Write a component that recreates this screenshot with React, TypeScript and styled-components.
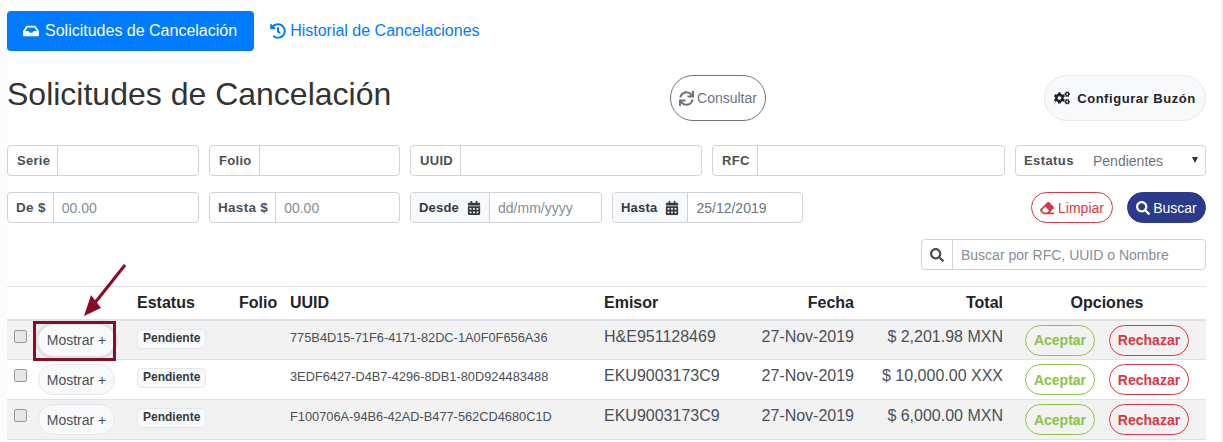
import React from 'react';
import styled, { createGlobalStyle } from 'styled-components';
import { FaCalendarAlt, FaCogs, FaEraser, FaHistory, FaInbox, FaSearch, FaSync } from 'react-icons/fa';

const GlobalStyle = createGlobalStyle`
  html, body { margin: 0; padding: 0; background: #fff; overflow: hidden; }
  body { font-family: "Liberation Sans", Arial, sans-serif; color: #333; }
  * { box-sizing: border-box; }
`;

// === Page ===
const Page = styled.div`
  position: relative;
  width: 1223px;
  height: 442px;
  overflow: hidden;
  padding: 11px 17px 0 7px;
  background: linear-gradient(to right, #fcfcfc 7px, #fff 7px, #fff 1221px, #f1f1f1 1221px);
`;

const TabBar = styled.nav`
  display: flex;
  align-items: center;
  gap: 16px;
  height: 40px;
`;

const Tab = styled.a<{ $active?: boolean }>`
  display: flex;
  align-items: center;
  gap: ${p => (p.$active ? '6px' : '4px')};
  height: 40px;
  padding: ${p => (p.$active ? '0 17px 0 16px' : '0')};
  border-radius: 4px;
  font-size: 16px;
  color: ${p => (p.$active ? '#fff' : '#007bff')};
  background: ${p => (p.$active ? '#007bff' : 'transparent')};
`;

const HeadRow = styled.div`
  display: grid;
  grid-template-columns: 663px 96px 1fr;
  align-items: center;
  height: 46px;
  margin-top: 24px;
`;

const Title = styled.h1`
  margin: -8px 0 0;
  font-size: 32px;
  font-weight: 400;
  line-height: 38px;
  color: #333;
`;

const PillButton = styled.button`
  display: flex;
  align-items: center;
  justify-content: center;
  gap: 3px;
  height: 46px;
  border-radius: 23px;
  font-family: inherit;
  font-size: 14px;
  padding: 0;
`;

const ConsultButton = styled(PillButton)`
  width: 96px;
  background: #fff;
  border: 1px solid #6c757d;
  color: #6c757d;
`;

const ConfigButton = styled(PillButton)`
  width: 162px;
  margin-left: auto;
  gap: 7px;
  background: #f8f9fa;
  border: 1px solid #e6e8ec;
  color: #212529;
  font-weight: 700;
  font-size: 13px;
  letter-spacing: 0.55px;
`;

// === Filters ===
const FilterGrid = styled.div`
  display: flex;
  flex-direction: column;
  gap: 16px;
  margin-top: 24px;
`;

const TopRow = styled.div`
  display: grid;
  grid-template-columns: 192px 191px 292px 293px 191px;
  column-gap: 10px;
  height: 31px;
`;

const BottomRow = styled(TopRow)`
  grid-template-columns: 192px 191px 192px 191px 1fr;
`;

const Group = styled.div`
  display: flex;
  height: 31px;
  border: 1px solid #ced4da;
  border-radius: 4px;
  background: #fff;
  font-size: 13px;
  overflow: hidden;
`;

const Addon = styled.span`
  display: flex;
  align-items: center;
  flex: none;
  padding: 0 7px 0 9px;
  font-weight: 700;
  color: #495057;
  border-right: 1px solid #ced4da;
  letter-spacing: 0.3px;
`;

const MoneyAddon = styled(Addon)`
  padding: 0 7px 0 8px;
  font-size: 13.5px;
`;

const DateAddon = styled(Addon)`
  gap: 8px;
  padding: 0 8px;
  color: #343a40;
  background: #f8f9fa;
  letter-spacing: 0.2px;
`;

const IconAddon = styled(Addon)`
  padding: 0 8px;
  color: #495057;
`;

const Field = styled.span<{ $muted?: boolean }>`
  display: flex;
  align-items: center;
  flex: 1;
  padding: 0 8px;
  font-size: 14px;
  color: ${p => (p.$muted ? '#868e96' : '#6c757d')};
`;

const StatusLabel = styled.span`
  padding-left: 8px;
  width: 77px;
  align-self: center;
  font-weight: 700;
  color: #495057;
  letter-spacing: 0.4px;
`;

const StatusValue = styled.span`
  flex: 1;
  align-self: center;
  font-size: 14px;
  color: #6c757d;
`;

const Caret = styled.span`
  align-self: center;
  margin-right: 7px;
  margin-top: -2px;
  width: 0;
  height: 0;
  border-left: 3px solid transparent;
  border-right: 3px solid transparent;
  border-top: 6px solid #333;
`;

const ActionCell = styled.div`
  display: flex;
  justify-content: flex-end;
  gap: 14px;
`;

const ActionButton = styled.button<{ $tone: 'outline' | 'solid' }>`
  display: flex;
  align-items: center;
  justify-content: center;
  gap: ${p => (p.$tone === 'outline' ? '4px' : '3px')};
  height: 31px;
  padding: 0;
  border-radius: 16px;
  font-family: inherit;
  font-size: 14px;
  width: ${p => (p.$tone === 'outline' ? '82px' : '79px')};
  color: ${p => (p.$tone === 'outline' ? '#dc3545' : '#fff')};
  background: ${p => (p.$tone === 'outline' ? '#fff' : '#2c3a8c')};
  border: 1px solid ${p => (p.$tone === 'outline' ? '#dc3545' : '#2c3a8c')};
`;

const SearchBar = styled(Group)`
  width: 285px;
  margin: 16px 0 0 auto;
`;

// === Table ===
const Table = styled.table`
  width: 1199px;
  margin-top: 16px;
  border-collapse: collapse;
  table-layout: fixed;
  border-top: 1px solid #dee2e6;
`;

const Th = styled.th<{ $align?: string; $inset?: number }>`
  height: 33px;
  padding: 0 ${p => p.$inset ?? 3}px 0 3px;
  font-size: 16px;
  font-weight: 700;
  color: #212529;
  text-align: ${p => p.$align ?? 'left'};
  border-bottom: 2px solid #dee2e6;
  white-space: nowrap;
`;

const Tr = styled.tr<{ $odd: boolean }>`
  background: ${p => (p.$odd ? '#f2f2f2' : '#fff')};
`;

const Td = styled.td<{ $align?: string }>`
  height: 40px;
  padding: 5px 3px 0;
  font-size: 16px;
  line-height: 22px;
  color: #495057;
  text-align: ${p => p.$align ?? 'left'};
  vertical-align: top;
  border-bottom: 1px solid #dee2e6;
  white-space: nowrap;
`;

const UuidCell = styled(Td)`
  font-size: 12.8px;
  line-height: 24px;
`;

const TotalCell = styled(Td)`
  padding-right: 5px;
  text-align: right;
`;

const Check = styled.input.attrs({ type: 'checkbox' })`
  appearance: none;
  display: block;
  width: 13px;
  height: 13px;
  margin: 4px 0 0 4px;
  background: #e6e6e6;
  border: 1px solid #9a9a9a;
  border-radius: 2px;
`;

const ShowButton = styled.button<{ $focused?: boolean }>`
  display: block;
  width: 77px;
  height: 31px;
  margin: -1px auto 0 1px;
  padding: 0;
  background: #f8f9fa;
  border: 1px solid ${p => (p.$focused ? '#f8f9fa' : '#e4e7eb')};
  border-radius: 16px;
  box-shadow: ${p => (p.$focused ? '0 0 0 3px #e0e0e0' : 'none')};
  font-family: inherit;
  font-size: 14px;
  color: #495057;
`;

const Badge = styled.span`
  display: block;
  width: fit-content;
  margin-top: 3px;
  padding: 1px 5px 2px;
  background: #f8f9fa;
  border: 1px solid #e4e7eb;
  border-radius: 4px;
  font-size: 12px;
  font-weight: 700;
  line-height: 15px;
  color: #343a40;
`;

const OptionCell = styled.div`
  display: flex;
  justify-content: center;
  gap: 14px;
  margin-top: -1px;
`;

const OptionButton = styled.button<{ $color: string; $width: number }>`
  width: ${p => p.$width}px;
  height: 31px;
  padding: 0;
  background: transparent;
  border: 1px solid ${p => p.$color};
  border-radius: 16px;
  font-family: inherit;
  font-size: 14px;
  font-weight: 700;
  color: ${p => p.$color};
`;

// === Annotation drawn over the screenshot ===
const Highlight = styled.div`
  position: absolute;
  left: 33px;
  top: 321px;
  width: 83px;
  height: 40px;
  border: 3px solid #8a0b28;
`;

const Arrow = styled.svg`
  position: absolute;
  left: 80px;
  top: 262px;
`;

const rows = [
  { uuid: '775B4D15-71F6-4171-82DC-1A0F0F656A36', emisor: 'H&E951128469', total: '$ 2,201.98 MXN' },
  { uuid: '3EDF6427-D4B7-4296-8DB1-80D924483488', emisor: 'EKU9003173C9', total: '$ 10,000.00 XXX' },
  { uuid: 'F100706A-94B6-42AD-B477-562CD4680C1D', emisor: 'EKU9003173C9', total: '$ 6,000.00 MXN' },
];

export default function App() {
  return (
    <Page>
      <GlobalStyle />
      <TabBar>
        <Tab $active><FaInbox size={16} /> Solicitudes de Cancelación</Tab>
        <Tab><FaHistory size={16} /> Historial de Cancelaciones</Tab>
      </TabBar>

      <HeadRow>
        <Title>Solicitudes de Cancelación</Title>
        <ConsultButton><FaSync size={15} /> Consultar</ConsultButton>
        <ConfigButton><FaCogs size={16} /> Configurar Buzón</ConfigButton>
      </HeadRow>

      <FilterGrid>
        <TopRow>
          <Group><Addon>Serie</Addon><Field /></Group>
          <Group><Addon>Folio</Addon><Field /></Group>
          <Group><Addon>UUID</Addon><Field /></Group>
          <Group><Addon>RFC</Addon><Field /></Group>
          <Group>
            <StatusLabel>Estatus</StatusLabel>
            <StatusValue>Pendientes</StatusValue>
            <Caret />
          </Group>
        </TopRow>
        <BottomRow>
          <Group><MoneyAddon>De $</MoneyAddon><Field $muted>00.00</Field></Group>
          <Group><MoneyAddon>Hasta $</MoneyAddon><Field $muted>00.00</Field></Group>
          <Group>
            <DateAddon>Desde <FaCalendarAlt size={14} /></DateAddon>
            <Field $muted>dd/mm/yyyy</Field>
          </Group>
          <Group>
            <DateAddon>Hasta <FaCalendarAlt size={14} /></DateAddon>
            <Field>25/12/2019</Field>
          </Group>
          <ActionCell>
            <ActionButton $tone="outline"><FaEraser size={14} /> Limpiar</ActionButton>
            <ActionButton $tone="solid"><FaSearch size={14} /> Buscar</ActionButton>
          </ActionCell>
        </BottomRow>
      </FilterGrid>

      <SearchBar>
        <IconAddon><FaSearch size={14} /></IconAddon>
        <Field $muted>Buscar por RFC, UUID o Nombre</Field>
      </SearchBar>

      <Table>
        <colgroup>
          <col width="27" />
          <col width="100" />
          <col width="102" />
          <col width="51" />
          <col width="314" />
          <col width="135" />
          <col width="121" />
          <col width="151" />
          <col width="198" />
        </colgroup>
        <thead>
          <tr>
            <Th />
            <Th />
            <Th>Estatus</Th>
            <Th>Folio</Th>
            <Th>UUID</Th>
            <Th>Emisor</Th>
            <Th $align="right">Fecha</Th>
            <Th $align="right" $inset={5}>Total</Th>
            <Th $align="center">Opciones</Th>
          </tr>
        </thead>
        <tbody>
          {rows.map((row, i) => (
            <Tr key={row.uuid} $odd={i % 2 === 0}>
              <Td><Check /></Td>
              <Td><ShowButton $focused={i === 0}>Mostrar +</ShowButton></Td>
              <Td><Badge>Pendiente</Badge></Td>
              <Td />
              <UuidCell>{row.uuid}</UuidCell>
              <Td>{row.emisor}</Td>
              <Td $align="right">27-Nov-2019</Td>
              <TotalCell>{row.total}</TotalCell>
              <Td>
                <OptionCell>
                  <OptionButton $color="#8bc34a" $width={70}>Aceptar</OptionButton>
                  <OptionButton $color="#dc3545" $width={80}>Rechazar</OptionButton>
                </OptionCell>
              </Td>
            </Tr>
          ))}
        </tbody>
      </Table>

      <Highlight />
      <Arrow width="50" height="60" viewBox="0 0 50 60">
        <path d="M45 3 L14 42" stroke="#8a0b28" strokeWidth="3" fill="none" />
        <path d="M4 54 L11 33 L21 46 Z" fill="#8a0b28" />
      </Arrow>
    </Page>
  );
}
